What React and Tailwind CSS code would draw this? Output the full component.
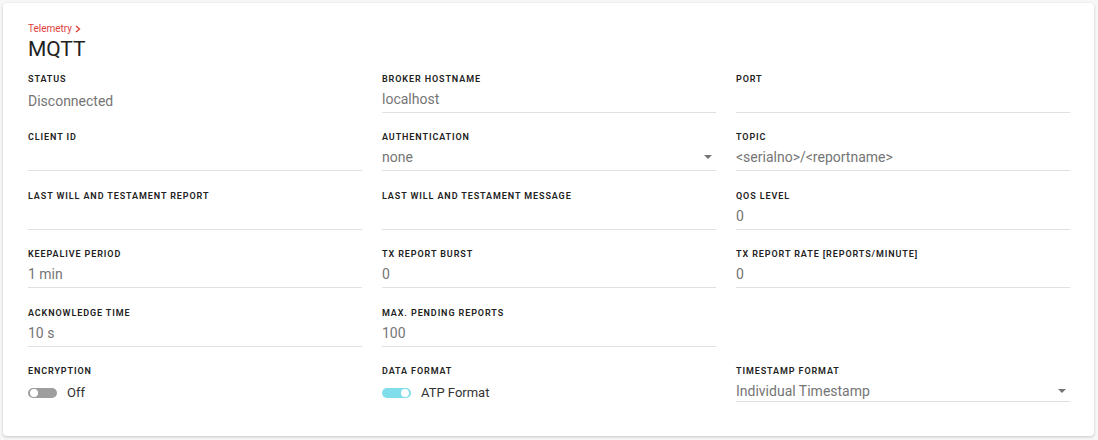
import React from "react";

const fields = [
  { label: "Status", value: "Disconnected", plain: true },
  { label: "Broker Hostname", value: "localhost" },
  { label: "Port", value: "" },
  { label: "Client ID", value: "" },
  { label: "Authentication", value: "none", select: true },
  { label: "Topic", value: "<serialno>/<reportname>" },
  { label: "Last Will and Testament Report", value: "" },
  { label: "Last Will and Testament Message", value: "" },
  { label: "QoS Level", value: "0" },
  { label: "Keepalive Period", value: "1 min" },
  { label: "TX Report Burst", value: "0" },
  { label: "TX Report Rate [Reports/Minute]", value: "0" },
  { label: "Acknowledge Time", value: "10 s" },
  { label: "Max. Pending Reports", value: "100" },
  null,
];

function Label({ children }) {
  return (
    <div className="h-[12px] text-[9px] leading-[12px] font-semibold uppercase tracking-[0.1em] text-[#212121]">
      {children}
    </div>
  );
}

function Caret() {
  return (
    <svg width="8" height="4" viewBox="0 0 8 4" className="shrink-0">
      <path d="M0 0 L8 0 L4 4 Z" fill="#757575" />
    </svg>
  );
}

function Field({ f }) {
  if (!f) return <div />;
  return (
    <div>
      <Label>{f.label}</Label>
      <div
        className={
          "mt-[4px] flex items-center justify-between h-[20px] pb-[3px] box-content border-b " +
          (f.plain ? "border-transparent" : "border-[#e0e0e0]")
        }
      >
        <span className={"text-[14px] leading-[20px] text-[#757575] " + (f.plain ? "pt-[3px]" : "")}>
          {f.value}
        </span>
        {f.select && (
          <span className="mr-[4px]">
            <Caret />
          </span>
        )}
      </div>
    </div>
  );
}

function Toggle({ on, text }) {
  return (
    <div className="mt-[5px] flex items-center h-[22px]">
      <div
        className={
          "relative w-[29px] h-[10px] rounded-full " +
          (on ? "bg-[#80deea]" : "bg-[#9e9e9e]")
        }
      >
        <div
          className={
            "absolute top-[1px] w-[8px] h-[8px] rounded-full bg-white " +
            (on ? "right-[2px]" : "left-[2px]")
          }
        />
      </div>
      <span className="ml-[10px] text-[13px] leading-[20px] text-[#333333]">{text}</span>
    </div>
  );
}

export default function App() {
  return (
    <div
      className="w-[1098px] h-[440px] bg-[#f7f7f7] p-[3px] pr-[4px]"
      style={{ fontFamily: "Roboto, 'Liberation Sans', sans-serif" }}
    >
      <div className="h-[433px] bg-white rounded-[4px] shadow-[0_1px_3px_rgba(0,0,0,0.2)] pl-[25px] pr-[24px] pt-[20px]">
        <div className="flex items-center text-[10px] leading-[12px] text-[#e0403a]">
          <span>Telemetry</span>
          <svg width="6" height="8" viewBox="0 0 6 8" className="ml-[3px]">
            <path d="M1 1 L4.5 4 L1 7" fill="none" stroke="#e0403a" strokeWidth="1.4" />
          </svg>
        </div>
        <div className="text-[21px] leading-[26px] text-[#212121] mt-[1px]">MQTT</div>
        <div className="mt-[11px] grid grid-cols-3 gap-x-[20px] gap-y-[18.4px]">
          {fields.map((f, i) => (
            <Field key={i} f={f} />
          ))}
          <div>
            <Label>Encryption</Label>
            <Toggle on={false} text="Off" />
          </div>
          <div>
            <Label>Data Format</Label>
            <Toggle on={true} text="ATP Format" />
          </div>
          <div>
            <Label>Timestamp Format</Label>
            <div className="mt-[4px] flex items-center justify-between h-[20px] box-content border-b border-[#e0e0e0]">
              <span className="text-[14px] leading-[20px] text-[#757575]">Individual Timestamp</span>
              <span className="mr-[4px]">
                <Caret />
              </span>
            </div>
          </div>
        </div>
      </div>
    </div>
  );
}
